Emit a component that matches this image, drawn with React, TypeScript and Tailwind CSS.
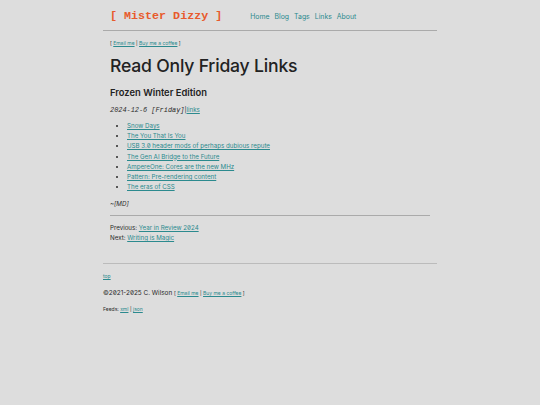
const links = [
  'Snow Days',
  'The You That Is You',
  'USB 3.0 header mods of perhaps dubious repute',
  'The Gen AI Bridge to the Future',
  'AmpereOne: Cores are the new MHz',
  'Pattern: Pre-rendering content',
  'The eras of CSS',
];

const sans = "font-['Inter','Liberation_Sans',Arial,sans-serif] [font-feature-settings:'zero']";
const linkCls = 'text-[#2b8a8e] underline';

export default function App() {
  return (
    <div className={`min-h-[405px] bg-[#dddddd] text-[#2a2a2a] ${sans}`}>
      <div className="mx-auto w-[334px]">
        <header className="flex items-center px-[7px] pt-[8px] pb-[6px] border-b border-[#aaaaaa]">
          <a className="font-['Liberation_Mono',monospace] font-bold text-[11.7px] leading-[16px] text-[#e85a2c] whitespace-pre">
            [ Mister Dizzy ]
          </a>
          <nav className="ml-[28px] mt-[2px] flex gap-[5px] text-[6.9px] text-[#2b8a8e]">
            <a>Home</a>
            <a>Blog</a>
            <a>Tags</a>
            <a>Links</a>
            <a>About</a>
          </nav>
        </header>

        <main className="px-[7px]">
          <p className="mt-[8px] text-[5px] leading-[8px]">
            [ <a className={linkCls}>Email me</a> | <a className={linkCls}>Buy me a coffee</a> ]
          </p>

          <h1 className="mt-[8px] text-[17.6px] leading-[22px] font-medium tracking-[-0.2px] text-[#222222]">Read Only Friday Links</h1>
          <h2 className="mt-[9px] text-[9.4px] leading-[13px] font-semibold text-[#222222]">Frozen Winter Edition</h2>

          <p className="mt-[6px] text-[6.2px] leading-[10px]">
            <span className="font-['Liberation_Mono',monospace] italic text-[6.9px]">2024-12-6 [Friday]</span>|<a className={linkCls}>links</a>
          </p>

          <ul className="mt-[6px] pl-[17px] list-disc text-[6.2px] leading-[10.2px]">
            {links.map((l) => (
              <li key={l}>
                <a className={linkCls}>{l}</a>
              </li>
            ))}
          </ul>

          <p className="mt-[7px] text-[6.2px] leading-[10px] italic">~[MD]</p>

          <div className="mt-[6px] border-t border-[#aaaaaa]" />

          <div className="mt-[7px] text-[6.2px] leading-[10px]">
            <p>
              Previous: <a className={linkCls}>Year in Review 2024</a>
            </p>
            <p>
              Next: <a className={linkCls}>Writing is Magic</a>
            </p>
          </div>
        </main>

        <footer className="mt-[20px] border-t border-[#bbbbbb] pt-[8px]">
          <p className="text-[5px] leading-[8px]">
            <a className={linkCls}>top</a>
          </p>
          <p className="mt-[8px] text-[6.4px] leading-[10px]">
            ©2021-2025 C. Wilson <span className="text-[5px]">[ <a className={linkCls}>Email me</a> | <a className={linkCls}>Buy me a coffee</a> ]</span>
          </p>
          <p className="mt-[7px] text-[5px] leading-[8px]">
            Feeds: <a className={linkCls}>xml</a> | <a className={linkCls}>json</a>
          </p>
        </footer>
      </div>
    </div>
  );
}
